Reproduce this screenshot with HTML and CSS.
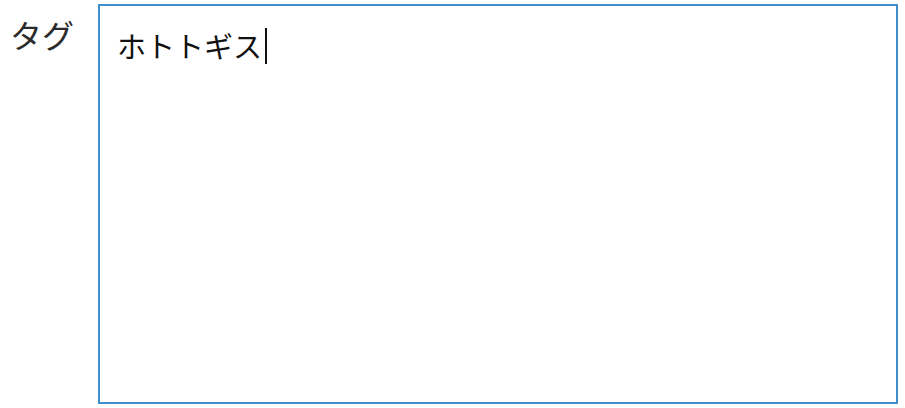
FILE: index.html
```html
<html>
<head>
<link rel="stylesheet" href="styles.css">
</head>
<body>
<div class="field">
	<label class="label">タグ</label>
	<div class="box"><span class="value">ホトトギス</span><span class="caret"></span></div>
</div>
</body>
</html>
```
FILE: styles.css
```css
body{
	margin:0;
	background-color:#fff;
	font-family:"Noto Sans CJK JP","Noto Sans",sans-serif;
}
.field{
	display:flex;
	padding:4px 0 0 10px;
}
.label{
	width:88px;
	font-size:32px;
	line-height:32px;
	color:#2b2b2b;
	padding-top:14px;
}
.box{
	display:flex;
	align-items:flex-start;
	padding:22px 0 0 17px;
	border:2px solid #3f8fcb;
	box-sizing:border-box;
	width:800px;
	height:400px;
}
.value{
	font-size:29px;
	line-height:35px;
	color:#111;
}
.caret{
	display:inline-block;
	width:2px;
	height:36px;
	margin-left:3px;
	background-color:#111;
}
```
